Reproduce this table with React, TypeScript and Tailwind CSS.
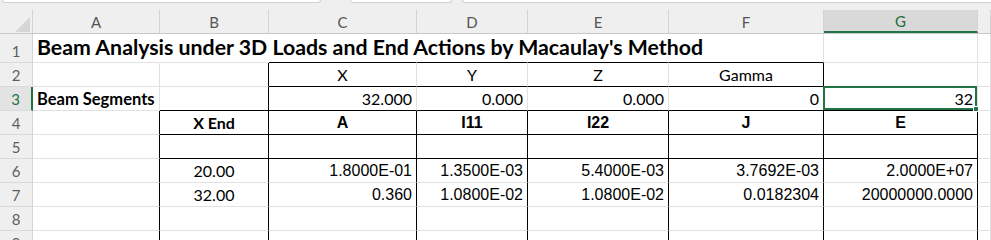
import React from "react";

type Align = "l" | "c" | "r";
type Face = "cal" | "ari";
type Spec = { t: string; a: Align; f: Face; b?: boolean };

const COLS = "grid grid-cols-[33px_127px_109px_148px_111px_141px_155px_154px_13px]";
const LETTERS = ["A", "B", "C", "D", "E", "F", "G", ""];

// cell contents keyed by "row:col" (col 0 = A)
const DATA: Record<string, Spec> = {
  "2:2": { t: "X", a: "c", f: "cal" },
  "2:3": { t: "Y", a: "c", f: "cal" },
  "2:4": { t: "Z", a: "c", f: "cal" },
  "2:5": { t: "Gamma", a: "c", f: "cal" },
  "3:0": { t: "Beam Segments", a: "l", f: "cal", b: true },
  "3:2": { t: "32.000", a: "r", f: "cal" },
  "3:3": { t: "0.000", a: "r", f: "cal" },
  "3:4": { t: "0.000", a: "r", f: "cal" },
  "3:5": { t: "0", a: "r", f: "cal" },
  "3:6": { t: "32", a: "r", f: "cal" },
  "4:1": { t: "X End", a: "c", f: "cal", b: true },
  "4:2": { t: "A", a: "c", f: "ari", b: true },
  "4:3": { t: "I11", a: "c", f: "ari", b: true },
  "4:4": { t: "I22", a: "c", f: "ari", b: true },
  "4:5": { t: "J", a: "c", f: "ari", b: true },
  "4:6": { t: "E", a: "c", f: "ari", b: true },
  "6:1": { t: "20.00", a: "c", f: "cal" },
  "6:2": { t: "1.8000E-01", a: "r", f: "ari" },
  "6:3": { t: "1.3500E-03", a: "r", f: "ari" },
  "6:4": { t: "5.4000E-03", a: "r", f: "ari" },
  "6:5": { t: "3.7692E-03", a: "r", f: "ari" },
  "6:6": { t: "2.0000E+07", a: "r", f: "ari" },
  "7:1": { t: "32.00", a: "c", f: "cal" },
  "7:2": { t: "0.360", a: "r", f: "ari" },
  "7:3": { t: "1.0800E-02", a: "r", f: "ari" },
  "7:4": { t: "1.0800E-02", a: "r", f: "ari" },
  "7:5": { t: "0.0182304", a: "r", f: "ari" },
  "7:6": { t: "20000000.0000", a: "r", f: "ari" },
};

// thin black cell borders of the table
function blackRight(r: number, c: number) {
  if (c === 1 || c === 5) return r >= 2;
  if (c === 0 || c === 2 || c === 3 || c === 4 || c === 6) return r >= 4;
  return false;
}
function blackBottom(r: number, c: number) {
  if (r === 1 || r === 2) return c >= 2 && c <= 5;
  if (r >= 3 && r <= 5) return c >= 1 && c <= 6;
  return false;
}

function Cell({ r, c }: { r: number; c: number }) {
  const spec = DATA[`${r}:${c}`];
  const isTitleRow = r === 1;
  const hideRight = isTitleRow && c <= 4;
  const right = hideRight
    ? "border-r-transparent"
    : blackRight(r, c)
    ? "border-r-black"
    : "border-r-[#e1e1e1]";
  const bottom = blackBottom(r, c) ? "border-b-black" : "border-b-[#e1e1e1]";
  const align = !spec
    ? ""
    : spec.a === "l"
    ? "justify-start pl-[4px]"
    : spec.a === "c"
    ? "justify-center"
    : "justify-end pr-[4px]";
  const face = !spec
    ? ""
    : spec.f === "cal"
    ? spec.b && spec.a === "l"
      ? "font-['Lato',sans-serif] text-[16.5px]"
      : "font-['Lato',sans-serif] text-[16px]"
    : "font-['Liberation_Sans',Arial,sans-serif] text-[16px]";
  const selected = r === 3 && c === 6;
  return (
    <div
      className={`relative flex items-end border-r border-b whitespace-nowrap leading-none text-black pb-[3px] ${right} ${bottom} ${align} ${face} ${
        spec?.b ? "font-bold" : "font-normal"
      }`}
    >
      {isTitleRow && c === 0 ? (
        <span className="pl-[4px] pb-[1px] font-['Lato',sans-serif] text-[21.3px] font-bold">
          Beam Analysis under 3D Loads and End Actions by Macaulay's Method
        </span>
      ) : (
        spec?.t
      )}
      {selected && (
        <div className="absolute -left-[1px] -top-[1px] right-0 bottom-0 z-10 border-2 border-[#217346]">
          <div className="absolute -right-[4px] -bottom-[4px] w-[6px] h-[6px] bg-[#217346] border border-white" />
        </div>
      )}
    </div>
  );
}

function RowHead({ n }: { n: number }) {
  const active = n === 3;
  return (
    <div
      className={`flex items-end justify-center pb-[3px] border-b border-b-[#dadada] font-['Lato',sans-serif] text-[15px] leading-none ${
        active
          ? "bg-[#e3e3e3] text-[#217346] border-r-2 border-r-[#217346]"
          : "bg-[#efefef] text-[#5e5e5e] border-r border-r-[#d4d4d4]"
      }`}
    >
      {n}
    </div>
  );
}

function SheetRow({ n, h }: { n: number; h: string }) {
  const cells = [0, 1, 2, 3, 4, 5, 6, 7];
  return (
    <div className={`${COLS} ${h}`}>
      <RowHead n={n} />
      {cells.map((c) => (
        <Cell key={c} r={n} c={c} />
      ))}
    </div>
  );
}

export default function App() {
  return (
    <div className="w-[991px] h-[240px] overflow-hidden bg-white">
      {/* bottom edge of the formula bar boxes */}
      <div className="flex h-[3px] bg-[#efefef]">
        <div className="ml-[2px] w-[319px] h-[3px] bg-white border-x border-b border-[#d1d1d1] rounded-b-[4px]" />
        <div className="ml-[29px] w-[102px] h-[3px] bg-white border-x border-b border-[#d1d1d1] rounded-b-[4px]" />
        <div className="ml-[10px] flex-1 h-[3px] bg-white border-l border-b border-[#d1d1d1] rounded-bl-[4px]" />
      </div>
      <div className="h-[7px] bg-[#efefef]" />

      {/* column headers */}
      <div className={`${COLS} h-[24px] bg-[#efefef] border-b border-[#c8c8c8]`}>
        <div className="relative border-r border-[#d4d4d4]">
          <svg className="absolute left-[15px] top-[7px]" width="15" height="15" viewBox="0 0 15 15">
            <polygon points="15,0 15,15 0,15" fill="#d6d6d6" />
          </svg>
        </div>
        {LETTERS.map((l, i) => (
          <div
            key={i}
            className={`flex items-center justify-center pt-[2px] font-['Lato',sans-serif] text-[15px] leading-none ${
              i === 6
                ? "bg-[#d9d9d9] text-[#1e6b41] border-b-2 border-b-[#217346] border-r border-r-[#d4d4d4]"
                : "text-[#555555] border-r border-r-[#d4d4d4]"
            }`}
          >
            {l}
          </div>
        ))}
      </div>

      <SheetRow n={1} h="h-[29px]" />
      <SheetRow n={2} h="h-[24px]" />
      <SheetRow n={3} h="h-[24px]" />
      <SheetRow n={4} h="h-[24px]" />
      <SheetRow n={5} h="h-[24px]" />
      <SheetRow n={6} h="h-[24px]" />
      <SheetRow n={7} h="h-[24px]" />
      <SheetRow n={8} h="h-[24px]" />
      <SheetRow n={9} h="h-[24px]" />
    </div>
  );
}
